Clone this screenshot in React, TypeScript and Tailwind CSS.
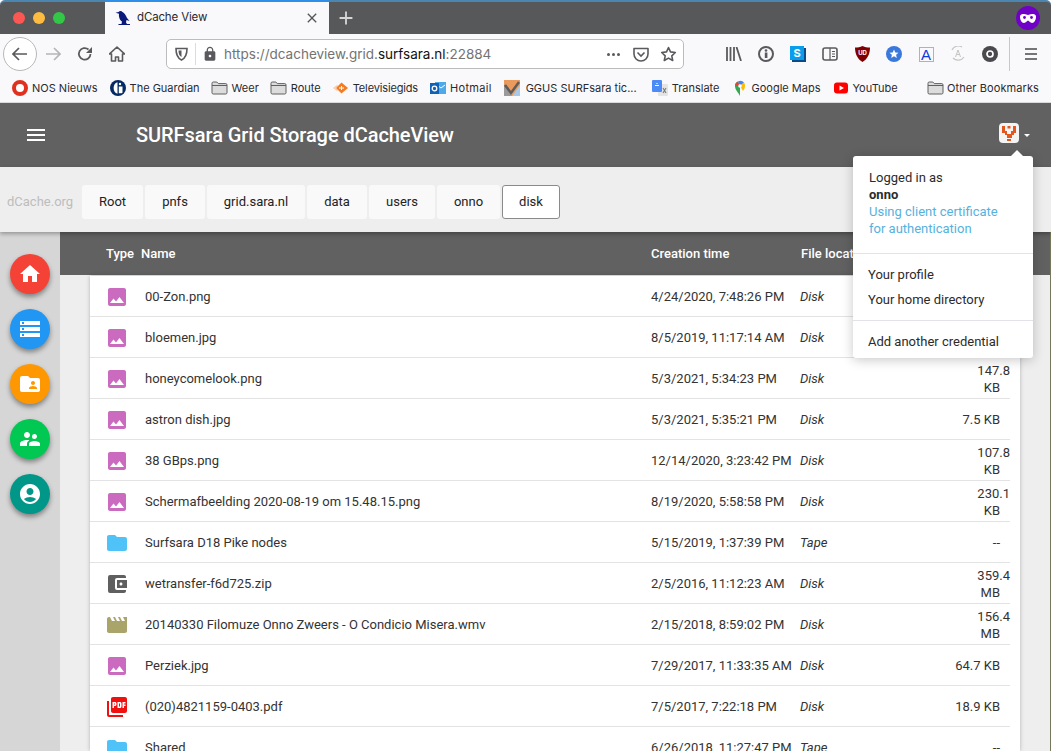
import React from "react";
import { MdImage, MdFolder, MdAccountBalanceWallet, MdMovie, MdPictureAsPdf, MdHome, MdStorage, MdFolderShared, MdSupervisorAccount, MdAccountCircle, MdMenu, MdLock, MdClose, MdAdd } from "react-icons/md";

const sys = "font-['Inter','Liberation_Sans',sans-serif]";

const Folder = () => (
  <svg width="17" height="16" viewBox="0 0 17 16" className="shrink-0">
    <path d="M1 3.200c0-.7.5-1.200 1.200-1.200h3.600l1.500 1.600h7.500c.7 0 1.200.5 1.200 1.200v8c0 .7-.5 1.200-1.200 1.200H2.200c-.7 0-1.200-.5-1.200-1.200z" fill="#dcdcdc" stroke="#606060" strokeWidth="1" />
    <path d="M1 5.500h15" stroke="#606060" strokeWidth="1" />
  </svg>
);

const favicons: Record<string, React.ReactNode> = {
  nos: (
    <svg width="16" height="16" viewBox="0 0 16 16"><circle cx="8" cy="8" r="6" fill="#fff" stroke="#e0301e" strokeWidth="4" /></svg>
  ),
  guardian: (
    <svg width="16" height="16" viewBox="0 0 16 16"><circle cx="8" cy="8" r="8" fill="#052962" /><path d="M7.500 2.200C5 2.800 3.600 5 3.600 8s1.400 5.200 3.900 5.800z" fill="#fff" /><path d="M8.800 6.500h3.700v6.200l-1 .6H8.800z" fill="#fff" /><circle cx="10" cy="4" r="1.200" fill="#fff" /></svg>
  ),
  folder: <Folder />,
  tv: (
    <svg width="16" height="16" viewBox="0 0 16 16"><path d="M0 8l4-3 1 1-3 2 3 2-1 1z" fill="#f6c9a8" /><path d="M8.500 2.500L15 8l-6.500 5.500L3 8z" fill="#f47b20" /><path d="M6 8h5M8.500 6v4" stroke="#fff" strokeWidth="1" /></svg>
  ),
  hotmail: (
    <svg width="16" height="16" viewBox="0 0 16 16"><rect x="5" y="2" width="11" height="12" fill="#4fa8e8" /><path d="M7 5l4 3 4-3" stroke="#fff" strokeWidth="1" fill="none" /><rect x="0" y="3" width="9" height="11" fill="#0f62b5" /><circle cx="4.500" cy="8.500" r="2.300" fill="none" stroke="#fff" strokeWidth="1.300" /></svg>
  ),
  ggus: (
    <svg width="16" height="16" viewBox="0 0 16 16"><rect width="16" height="16" fill="#e99a5c" /><path d="M0 4l8 12H0z" fill="#9a9a9a" /><path d="M16 5L8 16h8z" fill="#a8c8e8" /><path d="M1 5l6 8 8-11" stroke="#5c5c5c" strokeWidth="2.500" fill="none" /></svg>
  ),
  translate: (
    <svg width="16" height="16" viewBox="0 0 16 16"><rect x="6" y="4" width="10" height="12" rx="1" fill="#e4e4e4" /><rect x="0" y="0" width="10" height="12" rx="1" fill="#4c8bf5" /><path d="M3 5.500h4M5 3v1" stroke="#fff" strokeWidth="1.200" /><path d="M11 8l3 5M14 8l-3 5" stroke="#7a7a7a" strokeWidth="1.100" /></svg>
  ),
  maps: (
    <svg width="16" height="16" viewBox="0 0 16 16"><path d="M8 16c-1-3-5-5.500-5-10a5 5 0 0 1 3-4.600L8 6z" fill="#34a853" /><path d="M3 6a5 5 0 0 1 3-4.600L8 6z" fill="#ea4335" /><path d="M6 1.400A5 5 0 0 1 12 2.500L8 6z" fill="#4285f4" /><path d="M12 2.500A5 5 0 0 1 13 6c0 2-1 3.500-2 5L8 6z" fill="#fbbc04" /><circle cx="8" cy="6" r="1.800" fill="#fff" /></svg>
  ),
  yt: (
    <svg width="16" height="16" viewBox="0 0 16 16"><rect x="1" y="2.500" width="14" height="11" rx="3" fill="#ff0000" /><path d="M6.500 5.500L11 8l-4.500 2.500z" fill="#fff" /></svg>
  ),
};

const bookmarks: { f: string; t: string; item?: string; label?: string }[] = [
  { f: "nos", t: "NOS Nieuws" },
  { f: "guardian", t: "The Guardian" },
  { f: "folder", t: "Weer" },
  { f: "folder", t: "Route" },
  { f: "tv", t: "Televisiegids", label: "tracking-[-0.15px]" },
  { f: "hotmail", t: "Hotmail", label: "tracking-[0.3px]" },
  { f: "ggus", t: "GGUS SURFsara tic...", item: "gap-[6px] mr-[3px]" },
  { f: "translate", t: "Translate" },
  { f: "maps", t: "Google Maps" },
  { f: "yt", t: "YouTube" },
];

type Row = { kind: string; name: string; date: string; loc: string; size: string[] };
const rows: Row[] = [
  { kind: "img", name: "00-Zon.png", date: "4/24/2020, 7:48:26 PM", loc: "Disk", size: [] },
  { kind: "img", name: "bloemen.jpg", date: "8/5/2019, 11:17:14 AM", loc: "Disk", size: [] },
  { kind: "img", name: "honeycomelook.png", date: "5/3/2021, 5:34:23 PM", loc: "Disk", size: ["147.8", "KB"] },
  { kind: "img", name: "astron dish.jpg", date: "5/3/2021, 5:35:21 PM", loc: "Disk", size: ["7.5 KB"] },
  { kind: "img", name: "38 GBps.png", date: "12/14/2020, 3:23:42 PM", loc: "Disk", size: ["107.8", "KB"] },
  { kind: "img", name: "Schermafbeelding 2020-08-19 om 15.48.15.png", date: "8/19/2020, 5:58:58 PM", loc: "Disk", size: ["230.1", "KB"] },
  { kind: "dir", name: "Surfsara D18 Pike nodes", date: "5/15/2019, 1:37:39 PM", loc: "Tape", size: ["--"] },
  { kind: "zip", name: "wetransfer-f6d725.zip", date: "2/5/2016, 11:12:23 AM", loc: "Disk", size: ["359.4", "MB"] },
  { kind: "mov", name: "20140330 Filomuze Onno Zweers - O Condicio Misera.wmv", date: "2/15/2018, 8:59:02 PM", loc: "Disk", size: ["156.4", "MB"] },
  { kind: "img", name: "Perziek.jpg", date: "7/29/2017, 11:33:35 AM", loc: "Disk", size: ["64.7 KB"] },
  { kind: "pdf", name: "(020)4821159-0403.pdf", date: "7/5/2017, 7:22:18 PM", loc: "Disk", size: ["18.9 KB"] },
  { kind: "dir", name: "Shared", date: "6/26/2018, 11:27:47 PM", loc: "Tape", size: ["--"] },
];

function FileIcon({ kind }: { kind: string }) {
  if (kind === "img") return <MdImage size={24} color="#cb6bc0" />;
  if (kind === "dir") return <MdFolder size={24} color="#4fc3f7" />;
  if (kind === "zip") return <MdAccountBalanceWallet size={24} color="#5f5f5f" />;
  if (kind === "mov") return <MdMovie size={24} color="#a9a56a" />;
  return <MdPictureAsPdf size={24} color="#f01010" />;
}

function Fab({ color, children }: { color: string; children: React.ReactNode }) {
  return (
    <div className={`w-10 h-10 rounded-full flex items-center justify-center text-white shadow-[0_3px_5px_rgba(0,0,0,0.4)] ${color}`}>
      {children}
    </div>
  );
}

function TabBar() {
  return (
    <div className="h-[34px] bg-[#575859] border-t-2 border-[#4a86b0] flex items-stretch rounded-t-[5px]">
      <div className="w-[105px] flex items-center pl-[13px] gap-2">
        <span className="w-3 h-3 rounded-full bg-[#fc5753]" />
        <span className="w-3 h-3 rounded-full bg-[#fdbc40]" />
        <span className="w-3 h-3 rounded-full bg-[#33c748]" />
      </div>
      <div className="w-[224px] bg-[#f9f9fb] border-t-2 border-[#2f8fe8] -mt-[2px] flex items-center pl-[10px] pr-[9px]">
        <svg width="17" height="16" viewBox="0 0 17 16" className="shrink-0">
          <path d="M0.500 2.800L3.500 2C4.500 .8 6.500 .8 7.500 2c2 1 3.500 3.500 4.500 6l2.500 3-3-1-.5 2.500 1 1.500H15v1H3.500v-1h3l.5-2.500C5 10.500 3.500 7 4 3.800z" fill="#0b1a7a" />
        </svg>
        <span className={`ml-[5px] text-[11.5px] tracking-[-0.15px] text-[#2a2a2e] ${sys}`}>dCache View</span>
        <MdClose size={16} color="#55555a" className="ml-auto" />
      </div>
      <div className="w-[34px] flex items-center justify-center">
        <MdAdd size={22} color="#d6d6d6" />
      </div>
      <div className="ml-auto pr-[11px] flex items-center">
        <div className="w-6 h-6 rounded-full bg-[#7000c8] flex items-center justify-center">
          <svg width="16" height="9" viewBox="0 0 16 9">
            <path d="M0 2.500C0 .5 2 0 4 0c2 0 3 1 4 1s2-1 4-1 4 .5 4 2.500C16 6 14.500 9 12 9c-2 0-3-2.500-4-2.500S6 9 4 9C1.500 9 0 6 0 2.500z" fill="#fff" />
            <circle cx="4.500" cy="3.500" r="1.400" fill="#7000c8" />
            <circle cx="11.500" cy="3.500" r="1.400" fill="#7000c8" />
          </svg>
        </div>
      </div>
    </div>
  );
}

function ToolIcons() {
  const c = "#5a5a5e";
  return (
    <div className="flex items-center h-full">
      <div className="flex items-center">
        {[
          <svg key="lib" width="16" height="14" viewBox="0 0 16 14"><path d="M1 0v14M4.500 0v14M8 0v14M10.500 0l4.500 14" stroke={c} strokeWidth="1.800" fill="none" /></svg>,
          <svg key="i" width="16" height="16" viewBox="0 0 16 16"><circle cx="8" cy="8" r="7" fill="none" stroke={c} strokeWidth="2" /><rect x="6.800" y="6.500" width="2.600" height="5.500" fill={c} /><circle cx="8" cy="4.500" r="1.300" fill={c} /></svg>,
          <svg key="s" width="16" height="16" viewBox="0 0 16 16"><path d="M2 2h14v14H2z" fill="#0a4a86" /><rect x="0" y="0" width="14" height="14" fill="#0a9dec" /><text x="7" y="11" textAnchor="middle" fontSize="11" fontWeight="700" fill="#fff" fontFamily="Inter">S</text></svg>,
          <svg key="r" width="16" height="14" viewBox="0 0 16 14"><rect x="1" y="1" width="14" height="12" rx="2" fill="none" stroke={c} strokeWidth="1.600" /><path d="M8 1v12M10 4.500h3M10 7h3M10 9.500h3" stroke={c} strokeWidth="1.200" /></svg>,
          <svg key="u" width="15" height="16" viewBox="0 0 15 16"><path d="M0 1.500C3 1.500 5 1 7.500 0 10 1 12 1.500 15 1.500c0 6.500-2.500 11.500-7.500 14.500C2.500 13 0 8 0 1.500z" fill="#800000" /><text x="7.500" y="9" textAnchor="middle" fontSize="6" fontWeight="700" fill="#fff" fontFamily="Inter">UD</text></svg>,
          <svg key="st" width="16" height="16" viewBox="0 0 16 16"><circle cx="8" cy="8" r="8" fill="#3b78dc" /><path d="M8 3.500l1.300 2.900 3.200.3-2.400 2.100.7 3.100L8 10.300l-2.800 1.600.7-3.100-2.400-2.100 3.200-.3z" fill="#fff" /></svg>,
          <div key="a" className="w-[15px] h-[15px] border border-[#6cc8f5] flex items-center justify-center text-[15px] leading-none text-[#1238e0] font-['Liberation_Sans',sans-serif]">A</div>,
          <svg key="z" width="16" height="16" viewBox="0 0 16 16"><path d="M2 4a7 7 0 0 1 10-3M14 11a7 7 0 0 1-11 1" stroke="#c4c4c4" strokeWidth="1.200" fill="none" /><path d="M5.500 11L8 4l2.500 7M6.500 8.500h3" stroke="#c4c4c4" strokeWidth="1" fill="none" /></svg>,
          <svg key="o" width="16" height="16" viewBox="0 0 16 16"><circle cx="8" cy="8" r="8" fill="#4a4a4e" /><circle cx="8" cy="8" r="3" fill="none" stroke="#fff" strokeWidth="1.700" /></svg>,
        ].map((ic, i) => (
          <div key={i} className="w-8 flex items-center justify-center">{ic}</div>
        ))}
      </div>
      <div className="w-px h-[34px] bg-[#c8c8c8] ml-[3px]" />
      <div className="w-[41px] flex items-center justify-center">
        <svg width="12" height="12" viewBox="0 0 12 12"><path d="M0 1h12M0 6h12M0 11h12" stroke="#4a4a4e" strokeWidth="1.700" /></svg>
      </div>
    </div>
  );
}

function NavBar() {
  const c = "#5a5a5e";
  return (
    <div className="h-[40px] bg-[#f9f9fb] flex items-center pl-[3px]">
      <div className="w-[34px] h-[34px] rounded-full border border-[#b8b8b8] bg-white flex items-center justify-center shrink-0">
        <svg width="16" height="14" viewBox="0 0 16 14"><path d="M15 7H1.500M7 1L1 7l6 6" stroke={c} strokeWidth="1.700" fill="none" /></svg>
      </div>
      <div className="w-[32px] flex justify-center shrink-0">
        <svg width="16" height="14" viewBox="0 0 16 14"><path d="M1 7h13.500M9 1l6 6-6 6" stroke="#b5b5b8" strokeWidth="1.700" fill="none" /></svg>
      </div>
      <div className="w-[32px] flex justify-center shrink-0">
        <svg width="16" height="16" viewBox="0 0 16 16"><path d="M13.500 8A5.800 5.800 0 1 1 11.500 3.500" stroke={c} strokeWidth="1.800" fill="none" /><path d="M15 1v6H9z" fill={c} /></svg>
      </div>
      <div className="w-[32px] flex justify-center shrink-0">
        <svg width="16" height="16" viewBox="0 0 16 16"><path d="M8 1L.5 8h2v7h4v-4h3v4h4V8h2z" fill="none" stroke={c} strokeWidth="1.600" strokeLinejoin="round" /></svg>
      </div>
      <div className="w-[518px] h-[30px] ml-[33px] border border-[#bcbcbc] rounded-[5px] bg-white flex items-center shrink-0">
        <div className="w-[28px] flex justify-center shrink-0">
          <svg width="13" height="14" viewBox="0 0 13 14"><path d="M1 1.500h11c0 5.500-1 9.500-5.500 11.500C2 11 1 7 1 1.500z" fill="none" stroke={c} strokeWidth="1.600" /><path d="M3.500 3.500h3v6.500C4.500 9 3.500 7 3.500 3.500z" fill={c} /></svg>
        </div>
        <div className="w-px h-[22px] bg-[#dcdcdc]" />
        <MdLock size={16} color={c} className="ml-[6px] shrink-0" />
        <span className={`ml-[6px] text-[13.5px] text-[#737373] ${sys}`}>
          https://dcacheview.grid.<span className="text-[#111]">surfsara.nl</span>:22884
        </span>
        <div className="ml-auto flex items-center">
          <span className="flex gap-[2px] w-[28px] justify-center">
            <i className="w-[3px] h-[3px] rounded-full bg-[#5a5a5e]" />
            <i className="w-[3px] h-[3px] rounded-full bg-[#5a5a5e]" />
            <i className="w-[3px] h-[3px] rounded-full bg-[#5a5a5e]" />
          </span>
          <div className="w-[28px] flex justify-center">
            <svg width="16" height="15" viewBox="0 0 16 15"><path d="M1 1.500h14v5.500a7 7 0 0 1-14 0z" fill="none" stroke={c} strokeWidth="1.600" strokeLinejoin="round" /><path d="M4.500 5.500L8 9l3.500-3.500" stroke={c} strokeWidth="1.600" fill="none" /></svg>
          </div>
          <div className="w-[28px] flex justify-center pr-[1px]">
            <svg width="17" height="16" viewBox="0 0 17 16"><path d="M8.500 1.500l2 4.400 4.800.6-3.500 3.300.9 4.700-4.200-2.400-4.200 2.400.9-4.700-3.500-3.300 4.800-.6z" fill="none" stroke={c} strokeWidth="1.600" strokeLinejoin="round" /></svg>
          </div>
        </div>
      </div>
      <div className="ml-auto h-full"><ToolIcons /></div>
    </div>
  );
}

function Bookmarks() {
  return (
    <div className={`h-[29px] bg-[#f9f9fb] flex items-center pl-[12px] pr-[12px] gap-[12px] text-[11px] text-[#2a2a2e] border-b border-[#d8d8d8] ${sys}`}>
      {bookmarks.map((b) => (
        <div key={b.t} className={`flex items-center whitespace-nowrap ${b.item ?? "gap-[4px]"}`}>
          <span className="w-4 h-4 flex items-center justify-center">{favicons[b.f]}</span>
          <span className={b.label ?? ""}>{b.t}</span>
        </div>
      ))}
      <div className="ml-auto flex items-center gap-[3px] whitespace-nowrap">
        <Folder />
        <span className="tracking-[0.1px]">Other Bookmarks</span>
      </div>
    </div>
  );
}

function Avatar() {
  return (
    <div className="w-5 h-5 -mt-1 rounded-[4px] bg-[#f4f4f4] flex items-center justify-center">
      <svg width="16" height="16" viewBox="0 0 16 16">
        <path d="M1 1h3v5h2v3h2V6h0v3h2V6h2V1h3v7h-2v2h-2v3H6v-3H4V8H1zM6.500 1h3v2.500h-3zM6 14h4v2H6z" fill="#e2571e" />
      </svg>
    </div>
  );
}

function AppHeader() {
  return (
    <div className="h-[64px] bg-[#616161] flex items-center text-white shrink-0">
      <div className="w-[136px] pl-6 shrink-0"><MdMenu size={24} /></div>
      <h1 className="text-[20px] font-medium whitespace-nowrap tracking-[-0.06px]">SURFsara Grid Storage dCacheView</h1>
      <div className="ml-auto flex items-center pr-[21px]">
        <Avatar />
        <span className="ml-[5px] w-0 h-0 border-l-[3px] border-r-[3px] border-t-[3px] border-l-transparent border-r-transparent border-t-white" />
      </div>
    </div>
  );
}

function Breadcrumbs() {
  const crumbs = [["Root", "w-[61px]"], ["pnfs", "w-[60px]"], ["grid.sara.nl", "w-[98px]"], ["data", "w-[60px]"], ["users", "w-[66px]"], ["onno", "w-[63px]"]];
  return (
    <div className="h-[65px] bg-[#eeeeee] flex items-center pl-[7px] shrink-0 relative z-10 shadow-[0_2px_4px_rgba(0,0,0,0.3)] text-[13px]">
      <span className="w-[75px] text-[#bdbdbd] shrink-0 mt-[4px]">dCache.org</span>
      <div className="flex items-center gap-[2px] mt-[5px]">
        {crumbs.map(([t, w]) => (
          <div key={t} className={`h-[34px] ${w} bg-[#f9f9f9] rounded-[3px] flex items-center justify-center text-[#222]`}>{t}</div>
        ))}
        <div className="h-[34px] w-[58px] bg-white rounded-[3px] border border-[#8a8a8a] flex items-center justify-center text-[#222]">disk</div>
      </div>
    </div>
  );
}

function Menu() {
  return (
    <div className="absolute left-[853px] top-[156px] w-[180px] h-[202px] bg-white rounded-[3px] shadow-[0_2px_12px_rgba(0,0,0,0.22)] z-30 text-[13px] leading-[17px] text-[#2b2b2b]">
      <div className="absolute -top-[6px] left-[158px] w-0 h-0 border-l-[6px] border-r-[6px] border-b-[6px] border-l-transparent border-r-transparent border-b-white" />
      <div className="pt-[13px] pl-4 h-[98px] border-b border-[#e2e2e8]">
        <div>Logged in as</div>
        <div className="font-bold">onno</div>
        <div className="text-[#56b1de]">Using client certificate<br />for authentication</div>
      </div>
      <div className="pl-[15px] h-[67px] border-b border-[#e2e2e8] pt-[12px] flex flex-col gap-2">
        <div>Your profile</div>
        <div>Your home directory</div>
      </div>
      <div className="pl-[15px] pt-3">Add another credential</div>
    </div>
  );
}

function FileRow({ r }: { r: Row }) {
  return (
    <div className="h-[41px] shrink-0 border-b border-[#e3e3e3] flex items-center text-[13px] text-[#333] pt-[1px]">
      <div className="w-[55px] pl-[15px] shrink-0"><FileIcon kind={r.kind} /></div>
      <div className="flex-1 min-w-0 whitespace-nowrap pt-[1px]">{r.name}</div>
      <div className="w-[149px] shrink-0 whitespace-nowrap pt-[1px]">{r.date}</div>
      <div className="w-[60px] shrink-0 italic pt-[1px]">{r.loc}</div>
      <div className="flex-1 max-w-[150px] flex flex-col items-end leading-[17px] pr-[10px]">
        {r.size.map((s, i) => (
          <span key={s} className={r.size.length === 2 && i === 0 ? "-mr-[10px]" : ""}>{s}</span>
        ))}
      </div>
    </div>
  );
}

export default function App() {
  return (
    <div className="relative w-[1051px] h-[751px] overflow-hidden bg-white flex flex-col font-['Roboto',sans-serif]">
      <div className="shrink-0">
        <TabBar />
        <NavBar />
        <Bookmarks />
      </div>
      <AppHeader />
      <Breadcrumbs />
      <div className="flex flex-1 min-h-0 border-r border-[#77775c]">
        <aside className="w-[60px] bg-[#d6d6d6] shrink-0 flex flex-col items-center gap-[15px] pt-[22px]">
          <Fab color="bg-[#f44336]"><MdHome size={24} /></Fab>
          <Fab color="bg-[#2196f3]"><MdStorage size={24} /></Fab>
          <Fab color="bg-[#ff9800]"><MdFolderShared size={24} /></Fab>
          <Fab color="bg-[#00c853]"><MdSupervisorAccount size={24} /></Fab>
          <Fab color="bg-[#009688]"><MdAccountCircle size={24} /></Fab>
        </aside>
        <main className="flex-1 min-w-0 bg-[#eeeeee] flex flex-col">
          <div className="h-[44px] bg-[#616161] border-b border-[#eeeeee] shrink-0 flex items-center text-white text-[13px] font-medium">
            <div className="w-[46px]" />
            <div className="w-[35px]">Type</div>
            <div className="w-[510px]">Name</div>
            <div className="w-[150px]">Creation time</div>
            <div>File location</div>
          </div>
          <div className="ml-[30px] mr-[30px] flex-1 min-h-0 bg-white shadow-[0_0_4px_rgba(0,0,0,0.25)] pr-[10px] flex flex-col overflow-hidden">
            {rows.map((r) => <FileRow key={r.name} r={r} />)}
          </div>
        </main>
      </div>
      <Menu />
    </div>
  );
}
